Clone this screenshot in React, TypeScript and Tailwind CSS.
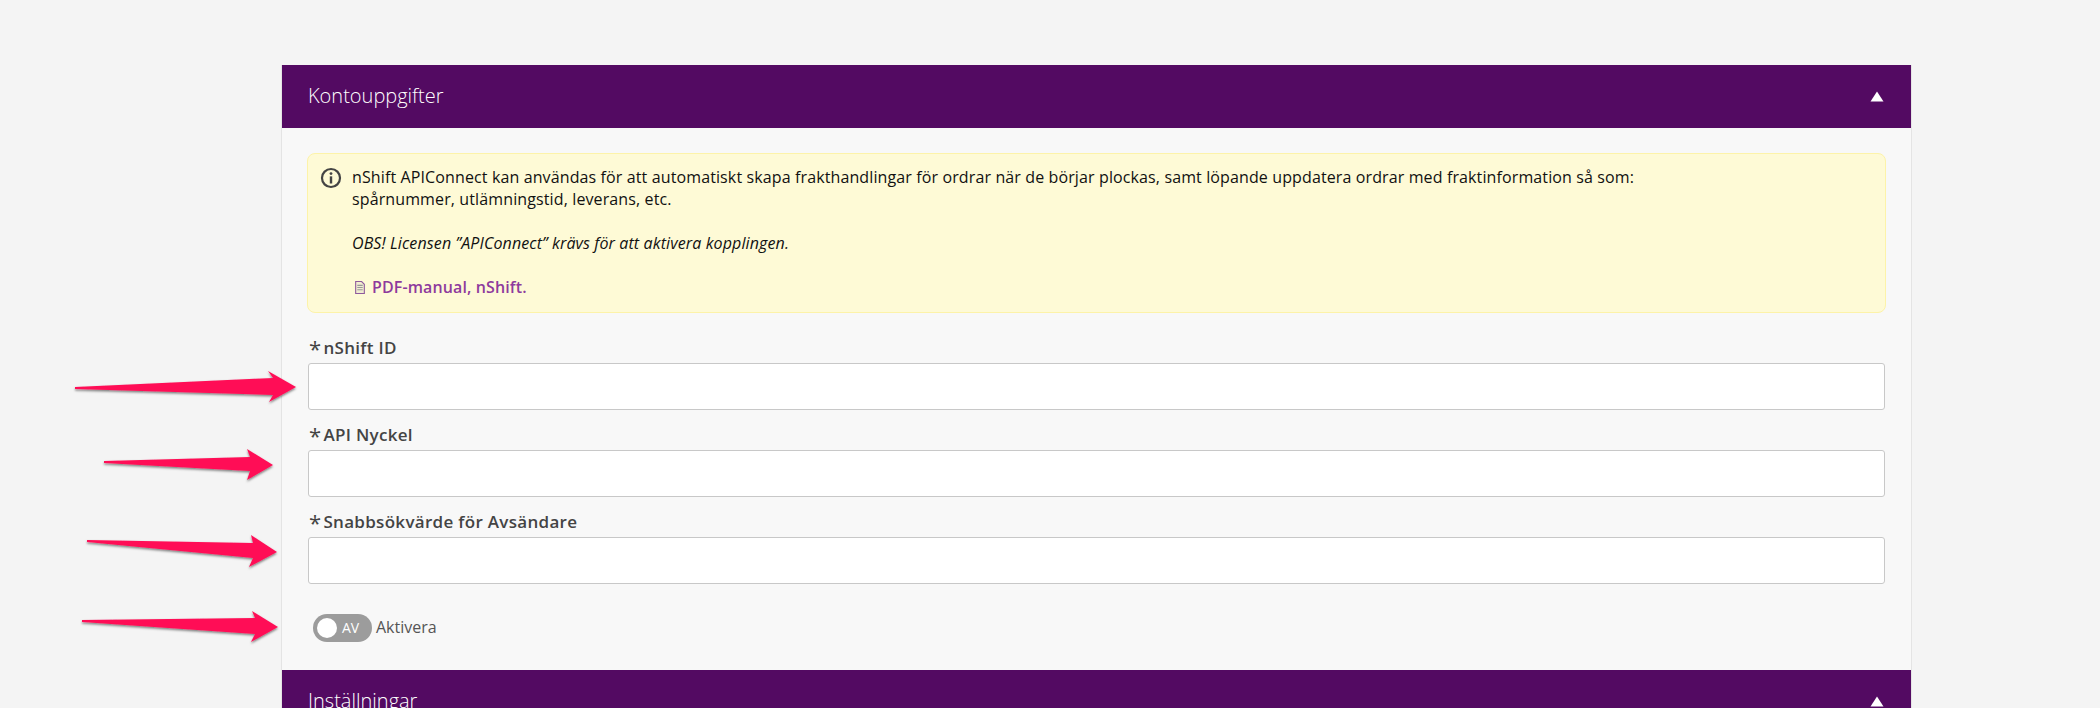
import React from "react";

const font = { fontFamily: '"Open Sans", sans-serif' };

function Triangle() {
  return (
    <svg width="14" height="11" viewBox="0 0 14 11" className="block">
      <path d="M7 0.5 L13.5 10.5 H0.5 Z" fill="#fff" />
    </svg>
  );
}

function Header({ title }: { title: string }) {
  return (
    <div className="flex h-[63px] shrink-0 items-center justify-between bg-[#530a62] pr-[27px] pb-[1px] pl-[26px]">
      <span className="text-[20px] leading-[28px] font-light text-white">{title}</span>
      <Triangle />
    </div>
  );
}

function Field({ label }: { label: string }) {
  return (
    <div className="flex flex-col">
      <label className="flex h-[26px] items-center pb-[4px] pl-[2px] text-[17px] leading-[22px] font-semibold tracking-[0.3px] text-[#444]">
        <span className="mr-[2px] text-[22px] font-normal">*</span>
        {label}
      </label>
      <input className="mx-[1px] h-[47px] rounded-[3px] border border-[#c8c8c8] bg-white" />
    </div>
  );
}

function Arrow({ points }: { points: string }) {
  return <polygon points={points} fill="#ff1156" filter="url(#arrowShadow)" />;
}

export default function App() {
  return (
    <div className="relative h-[708px] overflow-hidden bg-[#f4f4f4]" style={font}>
      <div className="ml-[281px] w-[1631px] pt-[65px]">
        <div className="flex flex-col border-r border-l border-[#e4e4e4] bg-[#f8f8f8]">
          <Header title="Kontouppgifter" />
          <div className="flex flex-col px-[25px] pt-[25px]">
            <div className="flex h-[160px] gap-[10px] rounded-[8px] border border-[#fdf3a9] bg-[#fefad6] pt-[12px] pl-[12px] text-[16px] leading-[22px] tracking-[0.12px] text-[#111]">
              <svg width="22" height="22" viewBox="0 0 20 20" className="mt-[1px] shrink-0">
                <circle cx="10" cy="10" r="8.2" fill="none" stroke="#444" strokeWidth="2" />
                <circle cx="10" cy="6" r="1.3" fill="#444" />
                <rect x="8.9" y="8.5" width="2.2" height="6.5" fill="#444" />
              </svg>
              <div className="flex flex-col">
                <p>
                  nShift APIConnect kan användas för att automatiskt skapa frakthandlingar för ordrar när de börjar plockas, samt löpande uppdatera ordrar med fraktinformation så som:
                  <br />
                  spårnummer, utlämningstid, leverans, etc.
                </p>
                <p className="mt-[22px] italic">OBS! Licensen ”APIConnect” krävs för att aktivera kopplingen.</p>
                <p className="mt-[22px] flex items-center gap-[7px] pl-[3px] font-semibold text-[#8e3a9d]">
                  <svg width="10" height="13" viewBox="0 0 9 12">
                    <path d="M0.5 0.5 H6 L8.5 3 V11.5 H0.5 Z" fill="#f1ecd0" stroke="#8e5a9d" strokeWidth="1" />
                    <path d="M2 4 H7 M2 6 H7 M2 8 H7" stroke="#999" strokeWidth="1" />
                  </svg>
                  PDF-manual, nShift.
                </p>
              </div>
            </div>
            <div className="mt-[24px] flex flex-col gap-[14px]">
              <Field label="nShift ID" />
              <Field label="API Nyckel" />
              <Field label="Snabbsökvärde för Avsändare" />
            </div>
            <div className="mt-[30px] flex h-[56px] items-start gap-[4px] pl-[6px] text-[16px] text-[#555]">
              <div className="flex h-[28px] w-[59px] items-center rounded-full bg-[#9c9c9c] pl-[4px]">
                <span className="h-[20px] w-[20px] rounded-full bg-white" />
                <span className="ml-[5px] text-[14px] leading-none text-white">AV</span>
              </div>
              <span className="leading-[26px]">Aktivera</span>
            </div>
          </div>
          <Header title="Inställningar" />
        </div>
      </div>
      <svg className="absolute top-0 left-0" width="320" height="708" viewBox="0 0 320 708">
        <defs>
          <filter id="arrowShadow" x="-10%" y="-50%" width="120%" height="200%">
            <feDropShadow dx="0" dy="1.5" stdDeviation="1" floodColor="#000" floodOpacity="0.5" />
          </filter>
        </defs>
        <Arrow points="75,387 273,378 268,371 296,387 269,402 273,395 75,389" />
        <Arrow points="104,461 250,457 247,449 273,465 247,480 250,471 104,463" />
        <Arrow points="87,540 253,543 251,535 277,552 249,567 253,558 87,542" />
        <Arrow points="82,620 255,618 252,611 278,627 251,642 255,634 82,622" />
      </svg>
    </div>
  );
}
